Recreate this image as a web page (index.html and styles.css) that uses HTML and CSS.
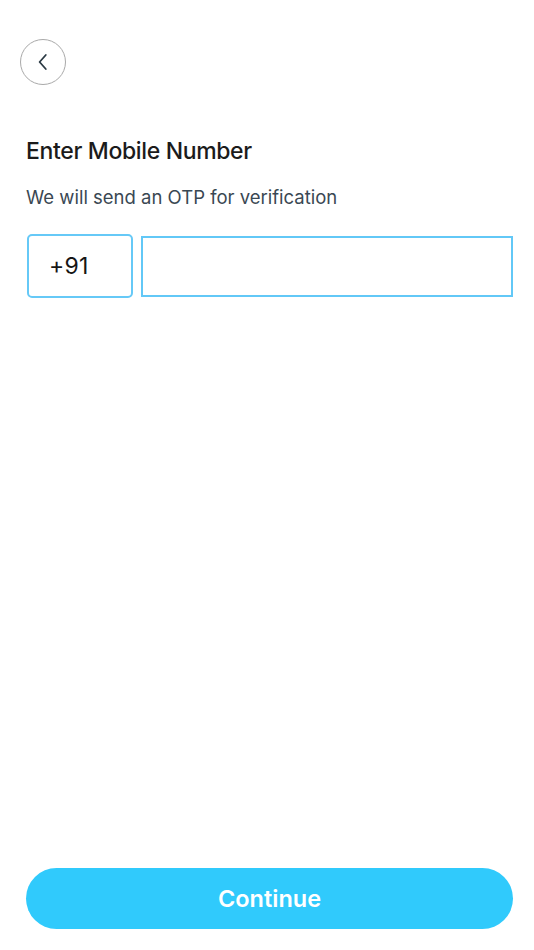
FILE: index.html
```html
<!DOCTYPE html>
<html lang="en">
<head>
<meta charset="utf-8">
<title>Enter Mobile Number</title>
<link rel="stylesheet" href="styles.css">
</head>
<body>
<div class="page">
  <button class="back" aria-label="Back">
    <svg width="14" height="18" viewBox="0 0 14 18"><path d="M9.8 2 L3.6 9 L9.8 16" fill="none" stroke="#2b3a44" stroke-width="1.8" stroke-linecap="round" stroke-linejoin="round"/></svg>
  </button>
  <h1 class="title">Enter Mobile Number</h1>
  <p class="subtitle">We will send an OTP for verification</p>
  <div class="phone-row">
    <div class="code">+91</div>
    <input class="number" type="tel" aria-label="Mobile number">
  </div>
  <button class="continue">Continue</button>
</div>
</body>
</html>
```
FILE: styles.css
```css
html, body {
  margin: 0;
  padding: 0;
  background: #ffffff;
}
body {
  font-family: Inter, "Noto Sans", sans-serif;
}
.page {
  height: 950px;
  box-sizing: border-box;
  display: flex;
  flex-direction: column;
  padding: 39px 21px 21px 26px;
}
.back {
  width: 46px;
  height: 46px;
  margin-left: -6px;
  border-radius: 50%;
  border: 1px solid #a9a9a9;
  background: #fff;
  display: flex;
  align-items: center;
  justify-content: center;
  padding: 0;
}
.title {
  margin: 52px 0 0 0;
  font-size: 23px;
  line-height: 28px;
  font-weight: 500;
  color: #1b1b1b;
  letter-spacing: -0.35px;
}
.subtitle {
  margin: 21px 0 0 0;
  font-size: 18.5px;
  line-height: 22px;
  color: #3a4853;
  font-weight: 400;
}
.phone-row {
  margin-top: 26px;
  margin-left: 1px;
  display: flex;
  align-items: center;
  gap: 8px;
}
.code {
  width: 106px;
  height: 64px;
  box-sizing: border-box;
  border: 2px solid #66c9f7;
  border-radius: 5px;
  display: flex;
  align-items: center;
  padding-left: 20px;
  font-size: 23px;
  letter-spacing: 0.3px;
  color: #161616;
}
.number {
  flex: 1;
  height: 61px;
  box-sizing: border-box;
  border: 2px solid #62c8f7;
  border-radius: 0;
  outline: none;
  margin: 0;
  padding: 0 12px;
  font-size: 20px;
  font-family: inherit;
}
.continue {
  margin-top: auto;
  height: 61px;
  border: none;
  border-radius: 31px;
  background: #30cafc;
  color: #fff;
  font-family: Inter, "Noto Sans", sans-serif;
  font-size: 23.5px;
  font-weight: 600;
}
```
